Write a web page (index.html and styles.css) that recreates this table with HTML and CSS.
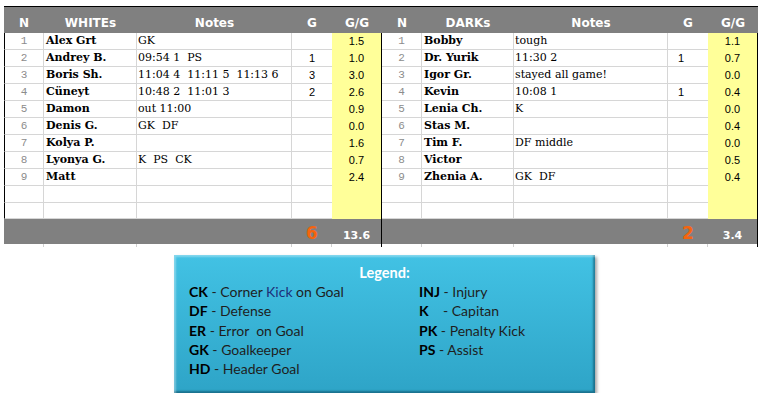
FILE: index.html
```html
<!DOCTYPE html>
<html>
<head>
<meta charset="utf-8">
<link rel="stylesheet" href="styles.css">
</head>
<body>
<div class="page">
  <div class="sheet">
    <div class="tbl left">
      <div class="h">N</div><div class="h">WHITEs</div><div class="h">Notes</div><div class="h">G</div><div class="h">G/G</div>

      <div class="c n">1</div><div class="c nm">Alex Grt</div><div class="c nt">GK</div><div class="c g"></div><div class="c gg">1.5</div>
      <div class="c n">2</div><div class="c nm">Andrey B.</div><div class="c nt">09:54 1  PS</div><div class="c g">1</div><div class="c gg">1.0</div>
      <div class="c n">3</div><div class="c nm">Boris Sh.</div><div class="c nt">11:04 4  11:11 5  11:13 6</div><div class="c g">3</div><div class="c gg">3.0</div>
      <div class="c n">4</div><div class="c nm">Cüneyt</div><div class="c nt">10:48 2  11:01 3</div><div class="c g">2</div><div class="c gg">2.6</div>
      <div class="c n">5</div><div class="c nm">Damon</div><div class="c nt">out 11:00</div><div class="c g"></div><div class="c gg">0.9</div>
      <div class="c n">6</div><div class="c nm">Denis G.</div><div class="c nt">GK  DF</div><div class="c g"></div><div class="c gg">0.0</div>
      <div class="c n">7</div><div class="c nm">Kolya P.</div><div class="c nt"></div><div class="c g"></div><div class="c gg">1.6</div>
      <div class="c n">8</div><div class="c nm">Lyonya G.</div><div class="c nt">K  PS  CK</div><div class="c g"></div><div class="c gg">0.7</div>
      <div class="c n">9</div><div class="c nm">Matt</div><div class="c nt"></div><div class="c g"></div><div class="c gg">2.4</div>
      <div class="c n"></div><div class="c nm"></div><div class="c nt"></div><div class="c g"></div><div class="c gg"></div>
      <div class="c n"></div><div class="c nm"></div><div class="c nt"></div><div class="c g"></div><div class="c gg"></div>

      <div class="f"></div><div class="f"></div><div class="f"></div><div class="f goals">6</div><div class="f total">13.6</div>
      <div class="t"></div><div class="t"></div><div class="t"></div><div class="t"></div><div class="t tl"></div>
    </div>

    <div class="tbl right">
      <div class="h">N</div><div class="h">DARKs</div><div class="h">Notes</div><div class="h">G</div><div class="h">G/G</div>

      <div class="c n">1</div><div class="c nm">Bobby</div><div class="c nt">tough</div><div class="c g"></div><div class="c gg">1.1</div>
      <div class="c n">2</div><div class="c nm">Dr. Yurik</div><div class="c nt">11:30 2</div><div class="c g">1</div><div class="c gg">0.7</div>
      <div class="c n">3</div><div class="c nm">Igor Gr.</div><div class="c nt">stayed all game!</div><div class="c g"></div><div class="c gg">0.0</div>
      <div class="c n">4</div><div class="c nm">Kevin</div><div class="c nt">10:08 1</div><div class="c g">1</div><div class="c gg">0.4</div>
      <div class="c n">5</div><div class="c nm">Lenia Ch.</div><div class="c nt">K</div><div class="c g"></div><div class="c gg">0.0</div>
      <div class="c n">6</div><div class="c nm">Stas M.</div><div class="c nt"></div><div class="c g"></div><div class="c gg">0.4</div>
      <div class="c n">7</div><div class="c nm">Tim F.</div><div class="c nt">DF middle</div><div class="c g"></div><div class="c gg">0.0</div>
      <div class="c n">8</div><div class="c nm">Victor</div><div class="c nt"></div><div class="c g"></div><div class="c gg">0.5</div>
      <div class="c n">9</div><div class="c nm">Zhenia A.</div><div class="c nt">GK  DF</div><div class="c g"></div><div class="c gg">0.4</div>
      <div class="c n"></div><div class="c nm"></div><div class="c nt"></div><div class="c g"></div><div class="c gg"></div>
      <div class="c n"></div><div class="c nm"></div><div class="c nt"></div><div class="c g"></div><div class="c gg"></div>

      <div class="f"></div><div class="f"></div><div class="f"></div><div class="f goals">2</div><div class="f total">3.4</div>
      <div class="t"></div><div class="t"></div><div class="t"></div><div class="t"></div><div class="t tl"></div>
    </div>
  </div>

  <div class="legend">
    <div class="legend-title">Legend:</div>
    <div class="legend-cols">
      <div class="lcol lcol-a">
        <div class="li"><b>CK</b> - Corner <span class="blue">Kick</span> on Goal</div>
        <div class="li"><b>DF</b> - Defense</div>
        <div class="li"><b>ER</b> - Error  on Goal</div>
        <div class="li"><b>GK</b> - Goalkeeper</div>
        <div class="li"><b>HD</b> - Header Goal</div>
      </div>
      <div class="lcol">
        <div class="li"><b>INJ</b> - Injury</div>
        <div class="li"><b>K</b>    - Capitan</div>
        <div class="li"><b>PK</b> - Penalty Kick</div>
        <div class="li"><b>PS</b> - Assist</div>
      </div>
    </div>
  </div>
</div>
</body>
</html>
```

FILE: styles.css
```css
html, body {
  margin: 0;
  padding: 0;
  background: #ffffff;
}

.page {
  padding: 6px 0 0 4px;
}

.sheet {
  display: flex;
  width: fit-content;
  border-top: 1px solid #000;
}

.tbl {
  display: grid;
  grid-template-rows: 26px repeat(10, 17px) 16px 25px 3px;
}

.left {
  grid-template-columns: 40px 93px 155px 40px 50px;
}

.right {
  grid-template-columns: 40px 92px 154px 40px 50px;
}

.h {
  background: #808080;
  color: #ffffff;
  font-family: "DejaVu Sans", sans-serif;
  font-weight: bold;
  font-size: 12px;
  line-height: 26px;
  padding-top: 3px;
  box-sizing: border-box;
  text-align: center;
  overflow: hidden;
}

.c {
  box-sizing: border-box;
  border-right: 1px solid #d6d6d6;
  border-bottom: 1px solid #d6d6d6;
  line-height: 16px;
  white-space: pre;
  overflow: hidden;
  color: #000;
}

.n {
  font-family: "Liberation Mono", monospace;
  font-size: 11px;
  color: #8c8c8c;
  text-align: center;
}

.left .n {
  border-left: 1px solid #000;
}

.nm {
  font-family: "DejaVu Serif", serif;
  font-weight: bold;
  font-size: 11px;
  padding-left: 2px;
}

.nt {
  font-family: "DejaVu Serif", serif;
  font-size: 11px;
  padding-left: 1px;
}

.g {
  border-right: none;
  font-family: "Liberation Sans", sans-serif;
  font-size: 11px;
  text-align: center;
}

.right .g {
  text-align: left;
  padding-left: 10px;
}

.gg {
  background: #ffff99;
  border-bottom: none;
  border-right: 1px solid #000;
  font-family: "Liberation Sans", sans-serif;
  font-size: 11px;
  text-align: center;
}

.f {
  background: #808080;
  box-sizing: border-box;
  color: #ffffff;
  text-align: center;
  font-family: "DejaVu Sans", sans-serif;
  font-weight: bold;
}

.goals {
  color: #f6640e;
  font-size: 17px;
  line-height: 17px;
  padding-top: 6px;
}

.total {
  font-size: 11px;
  line-height: 13px;
  padding-top: 10px;
  border-right: 1px solid #000;
}

.t {
  box-sizing: border-box;
  border-right: 1px solid #d0d0d0;
}

.tl {
  border-right: 1px solid #000;
}

.legend {
  margin: 8px 0 0 170px;
  width: 421px;
  height: 138px;
  box-sizing: border-box;
  background: linear-gradient(#42c2e4, #2ea4c7);
  box-shadow:
    inset 3px 3px 2px -1px rgba(255, 255, 255, 0.35),
    inset -3px -3px 2px -1px rgba(0, 50, 70, 0.45),
    2px 2px 3px rgba(0, 0, 0, 0.35);
  font-family: Lato, "Open Sans", sans-serif;
  padding-top: 8px;
}

.legend-title {
  text-align: center;
  color: #ffffff;
  font-weight: bold;
  font-size: 14.5px;
  line-height: 19px;
}

.legend-cols {
  display: flex;
  padding-left: 15px;
}

.lcol-a {
  width: 230px;
}

.li {
  font-size: 14px;
  line-height: 19.3px;
  color: #1e1e1e;
  white-space: pre;
}

.li b {
  color: #000;
}

.blue {
  color: #1d2f78;
}
```
